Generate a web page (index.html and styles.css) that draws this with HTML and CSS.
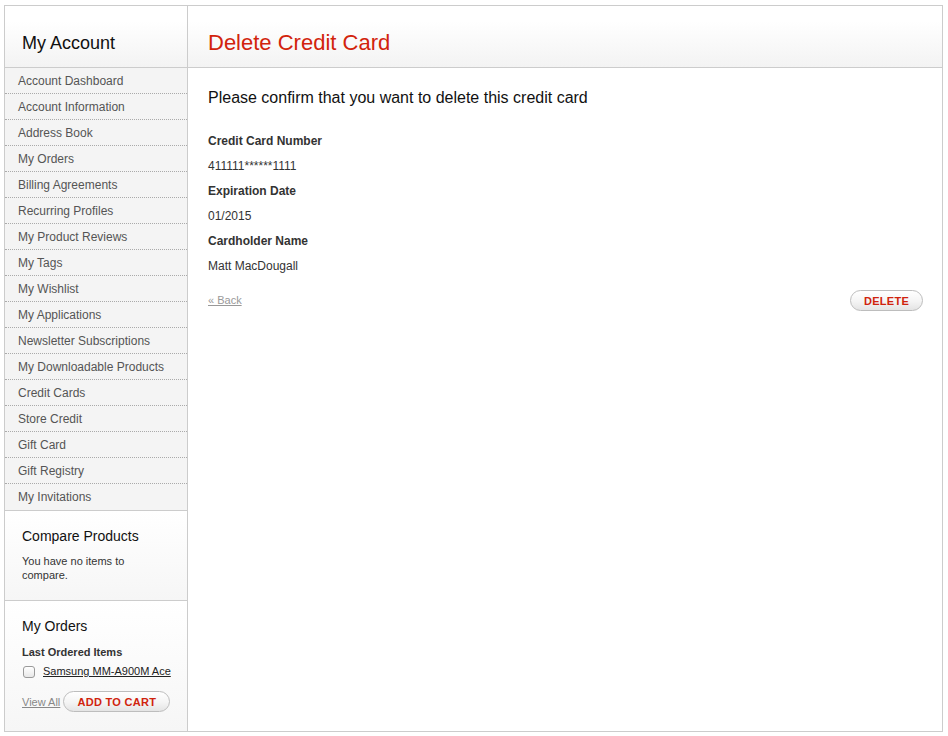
FILE: index.html
```html
<!DOCTYPE html>
<html>
<head>
<meta charset="utf-8">
<link rel="stylesheet" href="styles.css">
</head>
<body>
<div class="page">
  <aside class="sidebar">
    <div class="side-head"><h2>My Account</h2></div>
    <ul class="nav">
      <li><a>Account Dashboard</a></li>
      <li><a>Account Information</a></li>
      <li><a>Address Book</a></li>
      <li><a>My Orders</a></li>
      <li><a>Billing Agreements</a></li>
      <li><a>Recurring Profiles</a></li>
      <li><a>My Product Reviews</a></li>
      <li><a>My Tags</a></li>
      <li><a>My Wishlist</a></li>
      <li><a>My Applications</a></li>
      <li><a>Newsletter Subscriptions</a></li>
      <li><a>My Downloadable Products</a></li>
      <li><a>Credit Cards</a></li>
      <li><a>Store Credit</a></li>
      <li><a>Gift Card</a></li>
      <li><a>Gift Registry</a></li>
      <li><a>My Invitations</a></li>
    </ul>
    <div class="block compare">
      <h3>Compare Products</h3>
      <p>You have no items to compare.</p>
    </div>
    <div class="block orders">
      <h3>My Orders</h3>
      <div class="sub">Last Ordered Items</div>
      <label class="item"><span class="chk"></span><a class="prod">Samsung MM-A900M Ace</a></label>
      <div class="actions">
        <a class="viewall">View All</a>
        <span class="btn btn-cart">ADD TO CART</span>
      </div>
    </div>
  </aside>
  <main class="main">
    <div class="main-head"><h1>Delete Credit Card</h1></div>
    <div class="content">
      <p class="confirm">Please confirm that you want to delete this credit card</p>
      <dl class="info">
        <dt>Credit Card Number</dt>
        <dd>411111******1111</dd>
        <dt>Expiration Date</dt>
        <dd>01/2015</dd>
        <dt>Cardholder Name</dt>
        <dd>Matt MacDougall</dd>
      </dl>
      <div class="buttons">
        <a class="back">« Back</a>
        <span class="btn btn-delete">DELETE</span>
      </div>
    </div>
  </main>
</div>
</body>
</html>
```

FILE: styles.css
```css
* { box-sizing: border-box; }
html, body { margin: 0; padding: 0; background: #fff; }
body {
  font-family: "Liberation Sans", Arial, Helvetica, sans-serif;
  color: #333;
}
.page {
  margin: 5px 5px 0 4px;
  height: 727px;
  border: 1px solid #cccccc;
  display: flex;
}
.sidebar {
  width: 183px;
  flex: none;
  border-right: 1px solid #cccccc;
  display: flex;
  flex-direction: column;
}
.side-head, .main-head {
  height: 62px;
  border-bottom: 1px solid #cccccc;
  background: linear-gradient(#ffffff 0%, #ffffff 25%, #f3f3f3 100%);
  display: flex;
  align-items: center;
}
.side-head h2 {
  margin: 0 0 0 17px;
  font-size: 18px;
  font-weight: normal;
  color: #111;
  position: relative;
  top: 7px;
}
.nav {
  list-style: none;
  margin: 0;
  padding: 0;
}
.nav li {
  height: 26px;
  border-bottom: 1px dotted #aaaaaa;
  background: #f4f4f4;
  display: flex;
  align-items: center;
  padding-left: 13px;
  font-size: 12px;
  color: #555;
  white-space: nowrap;
}
.nav li:last-child { border-bottom: 1px solid #cccccc; height: 27px; }
.block {
  padding: 17px 10px 0 17px;
  background: linear-gradient(#ffffff, #f6f6f6);
  white-space: nowrap;
}
.block h3 {
  margin: 0;
  font-size: 14px;
  font-weight: normal;
  color: #111;
}
.compare {
  height: 90px;
  border-bottom: 1px solid #cccccc;
}
.compare p {
  margin: 10px 0 0 0;
  font-size: 11px;
  line-height: 14px;
  color: #333;
  white-space: normal;
  width: 120px;
}
.orders { flex: 1; padding-top: 17px; }
.orders .sub {
  margin-top: 12px;
  font-size: 11px;
  font-weight: bold;
  color: #333;
}
.item {
  display: flex;
  align-items: center;
  margin-top: 6px;
}
.chk {
  width: 12px;
  height: 12px;
  border: 1px solid #9a9a9a;
  border-radius: 3px;
  background: linear-gradient(#ffffff, #e8e8e8);
  margin: 2px 8px 0 1px;
}
.prod {
  font-size: 11px;
  color: #222;
  text-decoration: underline;
}
.actions {
  display: flex;
  align-items: center;
  margin-top: 13px;
}
.viewall {
  font-size: 11px;
  color: #888;
  text-decoration: underline;
  margin-right: 3px;
}
.btn {
  display: inline-flex;
  align-items: center;
  justify-content: center;
  height: 21px;
  border: 1px solid #bdbdbd;
  border-radius: 11px;
  background: linear-gradient(#ffffff 0%, #f4f4f4 55%, #e4e4e4 100%);
  color: #d0230d;
  font-weight: bold;
  font-size: 11px;
  letter-spacing: 0.3px;
}
.btn-cart { width: 107px; }
.main {
  flex: 1;
  display: flex;
  flex-direction: column;
}
.main h1 {
  margin: 0 0 0 20px;
  font-size: 22px;
  font-weight: normal;
  color: #d2230c;
  position: relative;
  top: 6px;
}
.content { padding: 20px 19px 0 20px; }
.confirm {
  margin: 1px 0 0 0;
  font-size: 16px;
  color: #111;
}
.info { margin: 27px 0 0 0; }
.info dt {
  font-size: 12px;
  font-weight: bold;
  color: #333;
  height: 25px;
  line-height: 14px;
}
.info dd {
  margin: 0;
  font-size: 12px;
  color: #333;
  height: 25px;
  line-height: 14px;
}
.buttons {
  display: flex;
  align-items: center;
  justify-content: space-between;
  margin-top: 4px;
}
.back {
  font-size: 11px;
  color: #999;
  text-decoration: underline;
}
.btn-delete { width: 73px; margin-top: 2px; }
```
